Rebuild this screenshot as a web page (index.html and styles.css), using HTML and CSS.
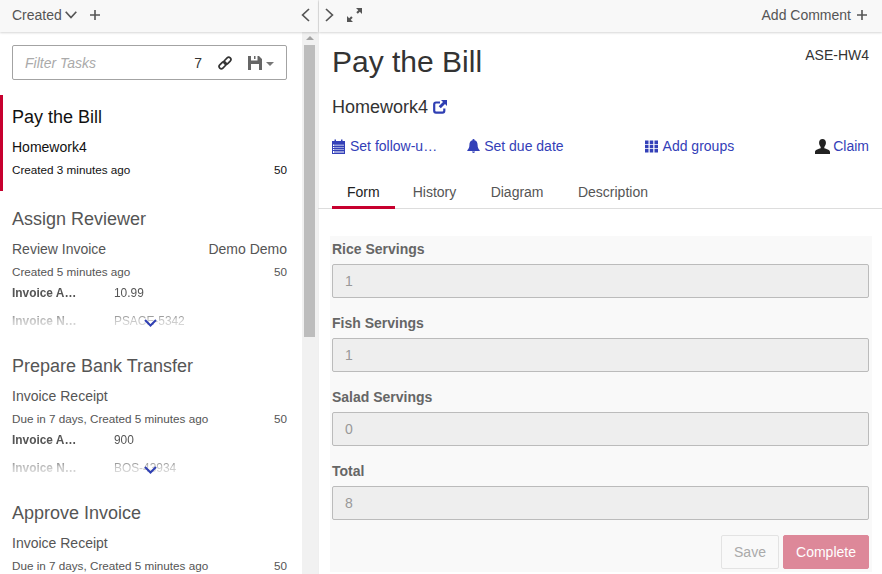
FILE: index.html
```html
<!DOCTYPE html>
<html lang="en">
<head>
    <meta charset="UTF-8">
    <title>Tasklist</title>
    <link rel="stylesheet" href="styles.css">
</head>
<body>

<!-- Task list -->
<div class="left">
    <div class="bar">
        <span class="bar-text">Created</span>
        <svg class="ico chev-down" viewBox="0 0 12 8"><path d="M.7.8 6 6.600 11.300.8" fill="none" stroke="currentColor" stroke-width="1.7"/></svg>
        <svg class="ico plus" viewBox="0 0 10 10"><path d="M5 0v10M0 5h10" fill="none" stroke="currentColor" stroke-width="1.6"/></svg>
        <svg class="ico chev-left" viewBox="0 0 9 14"><path d="M8 1 1.600 7 8 13" fill="none" stroke="currentColor" stroke-width="1.7"/></svg>
    </div>
    <div class="left-body">
        <div class="list">
            <div class="filter">
                <span class="filter-text">Filter Tasks</span>
                <span class="filter-count">7</span>
                <svg class="ico link" viewBox="0 0 14 14"><g fill="none" stroke="currentColor" stroke-width="1.700"><rect x="0.600" y="7" width="8" height="4.400" rx="2.200" transform="rotate(-45 4.600 9.200)"/><rect x="5.400" y="2.600" width="8" height="4.400" rx="2.200" transform="rotate(-45 9.400 4.800)"/></g></svg>
                <svg class="ico save" viewBox="0 0 14 14"><path d="M0 0h11l3 3v11H0zM3 0v4.500h6.500V0H7.500v3H6V0zM3 8v6h8V8z" fill="currentColor" fill-rule="evenodd"/></svg>
                <span class="caret"></span>
            </div>

            <div class="task active">
                <div class="task-title">Pay the Bill</div>
                <div class="task-row task-sub"><span>Homework4</span></div>
                <div class="task-row task-meta"><span>Created 3 minutes ago</span><span>50</span></div>
            </div>

            <div class="task">
                <div class="task-title">Assign Reviewer</div>
                <div class="task-row task-sub"><span>Review Invoice</span><span>Demo Demo</span></div>
                <div class="task-row task-meta"><span>Created 5 minutes ago</span><span>50</span></div>
                <div class="vars">
                    <div class="var"><b>Invoice A…</b><span>10.99</span></div>
                    <div class="var"><b>Invoice N…</b><span>PSACE-5342</span></div>
                </div>
                <svg class="ico more" viewBox="0 0 13 8"><path d="M1 1 6.500 6.500 12 1" fill="none" stroke="currentColor" stroke-width="2"/></svg>
            </div>

            <div class="task">
                <div class="task-title">Prepare Bank Transfer</div>
                <div class="task-row task-sub"><span>Invoice Receipt</span></div>
                <div class="task-row task-meta"><span>Due in 7 days, Created 5 minutes ago</span><span>50</span></div>
                <div class="vars">
                    <div class="var"><b>Invoice A…</b><span>900</span></div>
                    <div class="var"><b>Invoice N…</b><span>BOS-43934</span></div>
                </div>
                <svg class="ico more" viewBox="0 0 13 8"><path d="M1 1 6.500 6.500 12 1" fill="none" stroke="currentColor" stroke-width="2"/></svg>
            </div>

            <div class="task">
                <div class="task-title">Approve Invoice</div>
                <div class="task-row task-sub"><span>Invoice Receipt</span></div>
                <div class="task-row task-meta"><span>Due in 7 days, Created 5 minutes ago</span><span>50</span></div>
            </div>
        </div>
        <div class="scrollbar">
            <span class="scroll-up"></span>
            <div class="scroll-thumb"></div>
        </div>
    </div>
</div>

<!-- Task detail -->
<div class="right">
    <div class="bar">
        <svg class="ico chev-right" viewBox="0 0 9 14"><path d="M1 1 7.400 7 1 13" fill="none" stroke="currentColor" stroke-width="1.7"/></svg>
        <svg class="ico expand" viewBox="0 0 15 14"><path d="M9 0h6v6l-2.200-2.200-2 2L9.300 4.300l2-2zM6 14H0V8l2.200 2.200 2-2 1.500 1.500-2 2z" fill="currentColor"/></svg>
        <span class="bar-text add-comment">Add Comment</span>
        <svg class="ico plus" viewBox="0 0 10 10"><path d="M5 0v10M0 5h10" fill="none" stroke="currentColor" stroke-width="1.6"/></svg>
    </div>

    <div class="head">
        <h1>Pay the Bill</h1>
        <span class="tenant">ASE-HW4</span>
    </div>
    <div class="process">
        <span>Homework4</span>
        <svg class="ico open" viewBox="0 0 14 14"><path d="M7 2.500H3A1.800 1.800 0 0 0 1.200 4.300v6.500A1.800 1.800 0 0 0 3 12.600h6.500a1.800 1.800 0 0 0 1.800-1.800V8.500" fill="none" stroke="currentColor" stroke-width="2.200"/><path d="M8 0h6v6l-2-2-4.200 4.300L5.700 6.200 10 2z" fill="currentColor"/></svg>
    </div>

    <div class="actions">
        <a class="action act-follow">
            <svg class="ico act-ico cal" viewBox="0 0 13 15"><path d="M0 2h2.500V.5h1.500V2h5V.5h1.500V2H13v13H0zM1 5.500v8.500h11V5.500z" fill="currentColor" fill-rule="evenodd"/><path d="M1 7.500h11M1 9.500h11M1 11.500h11M3 5v9M5 5v9M7 5v9M9 5v9M11 5v9" stroke="currentColor" stroke-width="1"/></svg>
            <span>Set follow-u…</span>
        </a>
        <a class="action act-due">
            <svg class="ico act-ico bell" viewBox="0 0 13 14"><path d="M6.500 0a1 1 0 0 1 1 1.200C9.500 1.700 10.600 3.300 10.600 6c0 2.700.8 3.800 2.100 5.200v.8H.3v-.8C1.600 9.800 2.400 8.700 2.400 6c0-2.700 1.100-4.300 3.100-4.800A1 1 0 0 1 6.500 0zM5 12.600h3A1.500 1.400 0 0 1 5 12.600z" fill="currentColor"/></svg>
            <span>Set due date</span>
        </a>
        <a class="action act-groups">
            <svg class="ico act-ico" viewBox="0 0 13 12"><path d="M0 0h3.500v3.500H0zM4.750 0h3.500v3.500h-3.500zM9.500 0H13v3.500H9.500zM0 4.250h3.500v3.500H0zM4.750 4.250h3.500v3.500h-3.500zM9.500 4.250H13v3.500H9.500zM0 8.500h3.500V12H0zM4.750 8.500h3.500V12h-3.500zM9.500 8.500H13V12H9.500z" fill="currentColor"/></svg>
            <span>Add groups</span>
        </a>
        <a class="action act-claim">
            <svg class="ico act-ico user" viewBox="0 0 14 14"><path d="M7 0c2 0 3.200 1.500 3.200 3.600 0 1.600-.7 3-1.500 3.800v1.300c1.900.7 5.300 1.500 5.300 3.500V14H0v-1.800c0-2 3.400-2.800 5.300-3.500V7.400c-.8-.8-1.500-2.200-1.500-3.800C3.800 1.500 5 0 7 0z" fill="currentColor"/></svg>
            <span>Claim</span>
        </a>
    </div>

    <div class="tabs">
        <span class="tab current">Form</span>
        <span class="tab">History</span>
        <span class="tab">Diagram</span>
        <span class="tab">Description</span>
    </div>

    <div class="form">
        <div class="field">
            <label>Rice Servings</label>
            <div class="input">1</div>
        </div>
        <div class="field">
            <label>Fish Servings</label>
            <div class="input">1</div>
        </div>
        <div class="field">
            <label>Salad Servings</label>
            <div class="input">0</div>
        </div>
        <div class="field">
            <label>Total</label>
            <div class="input">8</div>
        </div>
        <div class="buttons">
            <span class="btn btn-save">Save</span>
            <span class="btn btn-complete">Complete</span>
        </div>
    </div>
</div>

</body>
</html>
```

FILE: styles.css
```css
/* Page */
html, body {
    height: 100%;
}

body {
    margin: 0;
    display: flex;
    overflow: hidden;
    background: #fff;
    color: #333;
    font-family: "Liberation Sans", Arial, sans-serif;
    font-size: 14px;
}

.ico {
    display: block;
    flex: none;
}

/* Top bars */
.bar {
    position: relative;
    z-index: 2;
    flex: none;
    display: flex;
    align-items: center;
    height: 32px;
    padding-bottom: 2px;
    box-sizing: border-box;
    background: #f8f8f8;
    box-shadow: 0 1px 2px rgba(0, 0, 0, 0.16);
    color: #555;
}

.left {
    width: 318px;
    height: 574px;
    display: flex;
    flex-direction: column;
}

.left .bar {
    padding-left: 12px;
    padding-right: 8px;
}

.chev-down { width: 12px; height: 8px; margin-left: 3px; }
.plus { width: 10px; height: 10px; }
.left .plus { margin-left: 13px; }
.chev-left { width: 9px; height: 14px; margin-left: auto; }

.left-body {
    flex: 1;
    display: flex;
    min-height: 0;
}

.list {
    width: 302px;
    overflow: hidden;
}

.scrollbar {
    width: 16px;
    background: #f1f1f1;
    padding: 0 3px 0 2px;
    box-sizing: border-box;
}

.scroll-up {
    display: block;
    width: 0;
    margin: 4px auto 0;
    border-left: 4px solid transparent;
    border-right: 4px solid transparent;
    border-bottom: 4px solid #a3a3a3;
}

.scroll-thumb {
    height: 292px;
    margin-top: 5px;
    background: #bdbdbd;
}

/* Filter box */
.filter {
    display: flex;
    align-items: center;
    height: 33px;
    margin: 13px 15px 15px 12px;
    padding-left: 12px;
    padding-right: 12px;
    border: 1px solid #a3a3a3;
    border-radius: 2px;
}

.filter-text {
    flex: 1;
    color: #aaa;
    font-style: italic;
}

.filter-count {
    color: #333;
}

.link { width: 14px; height: 14px; margin-left: 16px; color: #333; }
.save { width: 14px; height: 14px; margin-left: 16px; color: #666; }

.caret {
    margin-left: 4px;
    margin-top: 2px;
    border-left: 4px solid transparent;
    border-right: 4px solid transparent;
    border-top: 4px solid #777;
}

/* Task cards */
.task {
    position: relative;
    height: 147px;
    padding: 0 15px 0 12px;
    color: #555;
}

.task.active {
    height: 96px;
    margin-bottom: 6px;
    padding-left: 9px;
    border-left: 3px solid #c7002e;
    color: #111;
}

.task-title {
    padding-top: 11px;
    font-size: 18px;
    line-height: 22px;
}

.task-row {
    display: flex;
    justify-content: space-between;
}

.task-sub {
    margin-top: 10px;
    line-height: 18px;
}

.task-meta {
    margin-top: 6px;
    font-size: 11.7px;
    line-height: 16px;
}

.vars {
    margin-top: 5px;
    font-size: 11.9px;
    -webkit-mask-image: linear-gradient(to bottom, #000 45%, rgba(0, 0, 0, 0.35) 62%, transparent 90%);
    mask-image: linear-gradient(to bottom, #000 45%, rgba(0, 0, 0, 0.35) 62%, transparent 90%);
}

.var {
    display: flex;
    height: 28px;
    line-height: 16px;
}

.var b {
    width: 102px;
}

.more {
    position: absolute;
    left: 144px;
    top: 122px;
    width: 13px;
    height: 8px;
    color: #2f3fb3;
}

/* Detail pane */
.right {
    flex: 1;
    min-width: 0;
    height: 574px;
    display: flex;
    flex-direction: column;
    border-left: 1px solid #efefef;
    box-sizing: border-box;
}

.right .bar {
    padding-left: 6px;
    padding-right: 15px;
}

.chev-right { width: 9px; height: 14px; }
.expand { width: 15px; height: 14px; margin-left: 13px; }
.add-comment { margin-left: auto; margin-right: 6px; }

.head {
    display: flex;
    justify-content: space-between;
    padding: 12px 13px 0 13px;
    height: 50px;
}

h1 {
    margin: 0;
    font-size: 30px;
    font-weight: 400;
    line-height: 36px;
}

.tenant {
    margin-top: 2px;
    line-height: 18px;
}

.process {
    display: flex;
    align-items: center;
    padding-left: 13px;
    height: 24px;
    margin-top: 1px;
    font-size: 18px;
}

.open {
    width: 14px;
    height: 14px;
    margin-left: 5px;
    color: #2f3fb3;
}

.actions {
    display: flex;
    align-items: center;
    margin-top: 18px;
    padding: 0 13px;
    height: 18px;
}

.action {
    display: flex;
    align-items: center;
    color: #3340b8;
}

.act-ico { width: 13px; height: 13px; margin-right: 5px; }
.cal { height: 15px; }
.act-due { margin-left: 30px; }
.act-groups { margin-left: 81px; }
.act-claim { margin-left: auto; }
.user { width: 15px; height: 15px; margin-right: 3px; color: #222; }
.bell { height: 14px; margin-right: 4px; }

.tabs {
    display: flex;
    flex: none;
    margin-top: 19px;
    margin-left: -1px;
    padding-left: 14px;
    height: 34px;
    border-bottom: 1px solid #ddd;
}

.tab {
    padding: 10px 15px 0;
    margin-right: 4.4px;
    height: 22px;
    line-height: 16px;
    color: #555;
}

.tab.current {
    color: #222;
    border-bottom: 3px solid #c7002e;
    margin-right: 3px;
}

/* Form */
.form {
    margin: 27px 10px 2px 11px;
    padding: 0 3px 0 2px;
    background: #f9f9f9;
    flex: 1;
}

.field {
    height: 74px;
}

.field label {
    display: block;
    padding-top: 5px;
    height: 28px;
    line-height: 16px;
    font-weight: 700;
    color: #666;
    box-sizing: border-box;
}

.input {
    height: 34px;
    padding-left: 12px;
    line-height: 32px;
    background: #eee;
    border: 1px solid #bbb;
    border-radius: 2px;
    color: #999;
    box-sizing: border-box;
}

.buttons {
    display: flex;
    justify-content: flex-end;
    gap: 4px;
    margin-top: 3px;
}

.btn {
    height: 34px;
    line-height: 32px;
    text-align: center;
    border-radius: 2px;
    border: 1px solid #e3e3e3;
    box-sizing: border-box;
}

.btn-save {
    width: 58px;
    color: #aaa;
}

.btn-complete {
    width: 86px;
    background: #dd8899;
    border-color: #dd8899;
    color: #fff;
}
```
